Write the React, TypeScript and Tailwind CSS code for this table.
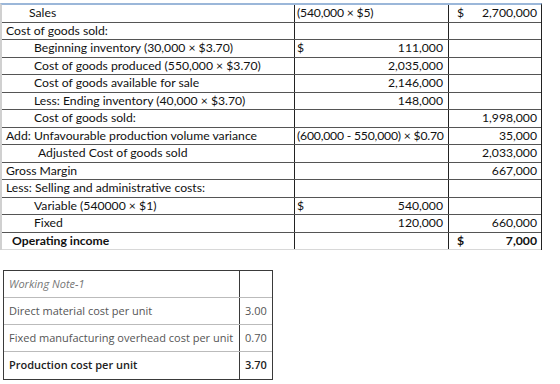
import React from 'react';

type Row = {
  label: string;
  indent: string;
  mid?: string;
  midDollar?: boolean;
  right?: string;
  rightDollar?: boolean;
  bold?: boolean;
};

const rows: Row[] = [
  { label: 'Sales', indent: 'pl-[27px]', mid: '(540,000 × $5)', right: '2,700,000', rightDollar: true },
  { label: 'Cost of goods sold:', indent: 'pl-[4px]' },
  { label: 'Beginning inventory (30,000 × $3.70)', indent: 'pl-[32px]', mid: '111,000', midDollar: true },
  { label: 'Cost of goods produced (550,000 × $3.70)', indent: 'pl-[32px]', mid: '2,035,000' },
  { label: 'Cost of goods available for sale', indent: 'pl-[32px]', mid: '2,146,000' },
  { label: 'Less: Ending inventory (40,000 × $3.70)', indent: 'pl-[32px]', mid: '148,000' },
  { label: 'Cost of goods sold:', indent: 'pl-[32px]', right: '1,998,000' },
  { label: 'Add: Unfavourable production volume variance', indent: 'pl-[4px]', mid: '(600,000 - 550,000) × $0.70', right: '35,000' },
  { label: 'Adjusted Cost of goods sold', indent: 'pl-[36px]', right: '2,033,000' },
  { label: 'Gross Margin', indent: 'pl-[4px]', right: '667,000' },
  { label: 'Less: Selling and administrative costs:', indent: 'pl-[4px]' },
  { label: 'Variable (540000 × $1)', indent: 'pl-[32px]', mid: '540,000', midDollar: true },
  { label: 'Fixed', indent: 'pl-[32px]', right: '660,000', mid: '120,000' },
  { label: 'Operating income', indent: 'pl-[10px]', right: '7,000', rightDollar: true, bold: true },
];

const isTextMid = (s?: string) => !!s && s.startsWith('(');

const notes = [
  { label: 'Working Note-1', value: '', italic: true },
  { label: 'Direct material cost per unit', value: '3.00' },
  { label: 'Fixed manufacturing overhead cost per unit', value: '0.70' },
  { label: 'Production cost per unit', value: '3.70', bold: true },
];

export default function App() {
  return (
    <div className="w-[560px] h-[384px] bg-white overflow-hidden">
      {/* Income statement */}
      <div
        className="w-[542px] mt-[3px] border-t-2 border-t-[#9bb7d9] border-l-2 border-l-[#d0d0d0] border-r border-r-[#222] text-[12.2px] text-[#111] leading-none whitespace-nowrap"
        style={{ fontFamily: 'Lato, "Open Sans", sans-serif' }}
      >
        {rows.map((r, i) => (
          <div
            key={i}
            className={`grid grid-cols-[292px_154px_93px] h-[17.5px] ${
              i === rows.length - 1 ? 'border-b border-b-[#d8d8d8]' : 'border-b border-b-[#555]'
            }`}
          >
            <div className={`flex items-center ${r.indent} ${r.bold ? 'font-bold' : ''}`}>{r.label}</div>
            <div className="flex items-center border-l border-l-[#222] pl-[2px] pr-[3px] overflow-hidden">
              {isTextMid(r.mid) ? (
                <span className="tracking-[-0.2px]">{r.mid}</span>
              ) : (
                <>
                  <span className="w-[20px]">{r.midDollar ? '$' : ''}</span>
                  <span className="ml-auto pr-[2px]">{r.mid}</span>
                </>
              )}
            </div>
            <div className={`flex items-center border-l border-l-[#222] pl-[8px] pr-[4px] ${r.bold ? 'font-bold' : ''}`}>
              <span>{r.rightDollar ? '$' : ''}</span>
              <span className="ml-auto">{r.right}</span>
            </div>
          </div>
        ))}
      </div>

      {/* Working note */}
      <div
        className="ml-[3px] mt-[20px] w-[270px] border border-[#3a3a3a] text-[11px] text-[#555]"
        style={{ fontFamily: '"Open Sans", Lato, sans-serif' }}
      >
        {notes.map((n, i) => (
          <div
            key={i}
            className={`grid grid-cols-[235px_1fr] h-[27px] ${i < notes.length - 1 ? 'border-b border-b-[#bbb]' : ''}`}
          >
            <div
              className={`flex items-center pl-[5px] ${n.italic ? 'italic text-[#777]' : ''} ${n.bold ? 'font-semibold text-[#222]' : ''}`}
            >
              {n.label}
            </div>
            <div className={`flex items-center pl-[5px] border-l border-l-[#3a3a3a] ${n.bold ? 'font-semibold text-[#222]' : ''}`}>
              {n.value}
            </div>
          </div>
        ))}
      </div>
    </div>
  );
}
